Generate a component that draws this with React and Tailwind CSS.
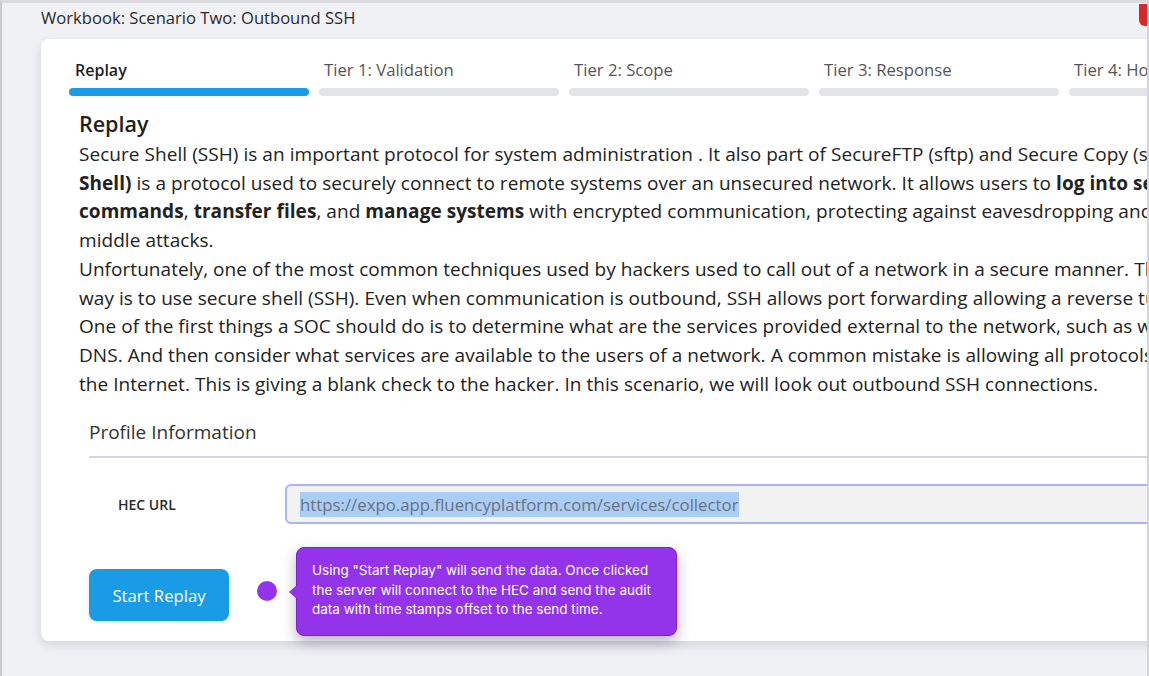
import React from "react";

const tabs = [
  { label: "Replay", active: true },
  { label: "Tier 1: Validation" },
  { label: "Tier 2: Scope" },
  { label: "Tier 3: Response" },
  { label: "Tier 4: Hosts" },
];

const body = { fontFamily: '"Open Sans", "Noto Sans", sans-serif' };
const tipFont = { fontFamily: 'Inter, "Noto Sans", sans-serif' };

const App = () => {
  return (
    <div
      className="relative h-[676px] w-[1149px] overflow-hidden border-t-[3px] border-l-2 border-r-2 border-t-[#dcdce0] border-l-[#c9c9cf] border-r-[#d4d4da] bg-[#f0f1f5] text-[#222]"
      style={body}
    >
      {/* red badge peeking in from the corner */}
      <div className="absolute right-0 top-[1px] h-[22px] w-[8px] rounded-bl-[6px] bg-[#dc2626]" />

      <div className="pl-[39px] pt-[4px] text-[16.6px] leading-[22px] text-[#2a2a2a]">
        Workbook: Scenario Two: Outbound SSH
      </div>

      <div className="ml-[39px] mt-[10px] w-[1400px] rounded-lg bg-white pb-[20px] pt-[20px] shadow-[0_4px_12px_rgba(0,0,0,0.12)]">
        {/* step tabs */}
        <div className="flex gap-[10px] pl-[28px]">
          {tabs.map((t) => (
            <div key={t.label} className="w-[240px] shrink-0">
              <div
                className={
                  t.active
                    ? "pl-[6px] text-[16px] font-semibold leading-[22px] text-[#1f1f1f]"
                    : "pl-[5px] text-[16.7px] leading-[22px] text-[#555]"
                }
              >
                {t.label}
              </div>
              <div
                className={
                  t.active
                    ? "mt-[7px] h-2 rounded-full bg-[#1a9be6]"
                    : "mt-[7px] h-2 rounded-full bg-[#e3e4e8]"
                }
              />
            </div>
          ))}
        </div>

        <div className="px-[38px] pt-[14px]">
          <h2 className="text-[21.5px] font-semibold leading-[28px] text-[#1f1f1f]">
            Replay
          </h2>
          <div className="whitespace-nowrap pt-[2px] text-[19px] leading-[28.7px] tracking-[0.05px] text-[#222]">
            <p>
              Secure Shell (SSH) is an important protocol for system administration . It also
              part of SecureFTP (sftp) and Secure Copy (scp). SSH (Secure
              <br />
              <b>Shell)</b> is a protocol used to securely connect to remote systems over an
              unsecured network. It allows users to <b>log into servers</b>, <b>execute</b>
              <br />
              <b>commands</b>, <b>transfer files</b>, and <b>manage systems</b> with encrypted
              communication, protecting against eavesdropping and man-in-the-
              <br />
              middle attacks.
            </p>
            <p>
              Unfortunately, one of the most common techniques used by hackers used to call out
              of a network in a secure manner. The easiest
              <br />
              way is to use secure shell (SSH). Even when communication is outbound, SSH allows
              port forwarding allowing a reverse tunnel.
              <br />
              One of the first things a SOC should do is to determine what are the services
              provided external to the network, such as web and
              <br />
              DNS. And then consider what services are available to the users of a network. A
              common mistake is allowing all protocols out to
              <br />
              the Internet. This is giving a blank check to the hacker. In this scenario, we
              will look out outbound SSH connections.
            </p>
          </div>

          {/* profile form */}
          <div className="ml-[10px] mt-[21px]">
            <div className="border-b-2 border-[#d3d6de] pb-[11px] text-[19px] leading-[26px] text-[#333]">
              Profile Information
            </div>
            <div className="mt-[26px] flex items-center">
              <div className="w-[196px] shrink-0 pl-[29px] text-[14px] font-semibold text-[#2a2a2a]">
                HEC URL
              </div>
              <div className="flex h-[40px] flex-1 items-center rounded-md border-2 border-[#a9b5fb] bg-[#f2f2f2] px-[13px]">
                <span className="bg-[#aacdf6] text-[16.8px] leading-[25px] text-[#6b7280]">
                  https://expo.app.fluencyplatform.com/services/collector
                </span>
              </div>
            </div>

            <div className="relative mt-[45px] flex">
              <button className="h-[52px] w-[140px] rounded-lg bg-[#1a9be6] text-[16.7px] font-medium text-white shadow-[0_1px_3px_rgba(0,0,0,0.15)]">
                Start Replay
              </button>

              {/* walkthrough hint */}
              <div className="absolute left-[168px] top-[12px] h-[20px] w-[20px] rounded-full bg-[#9333ea]" />
              <div
                className="absolute left-[207px] top-[-22px] w-[381px] whitespace-normal rounded-lg border border-[#7e22ce] bg-[#9333ea] pb-[15px] pl-[15px] pr-[16px] pt-[13px] text-[13.5px] leading-[19.5px] text-white shadow-[0_6px_14px_rgba(60,40,90,0.35)]"
                style={tipFont}
              >
                <div className="absolute left-[-8px] top-[37px] h-0 w-0 border-y-[7px] border-r-[8px] border-y-transparent border-r-[#9333ea]" />
                Using "Start Replay" will send the data. Once clicked the server will connect to
                the HEC and send the audit data with time stamps offset to the send time.
              </div>
            </div>
          </div>
        </div>
      </div>
    </div>
  );
};

export default App;
